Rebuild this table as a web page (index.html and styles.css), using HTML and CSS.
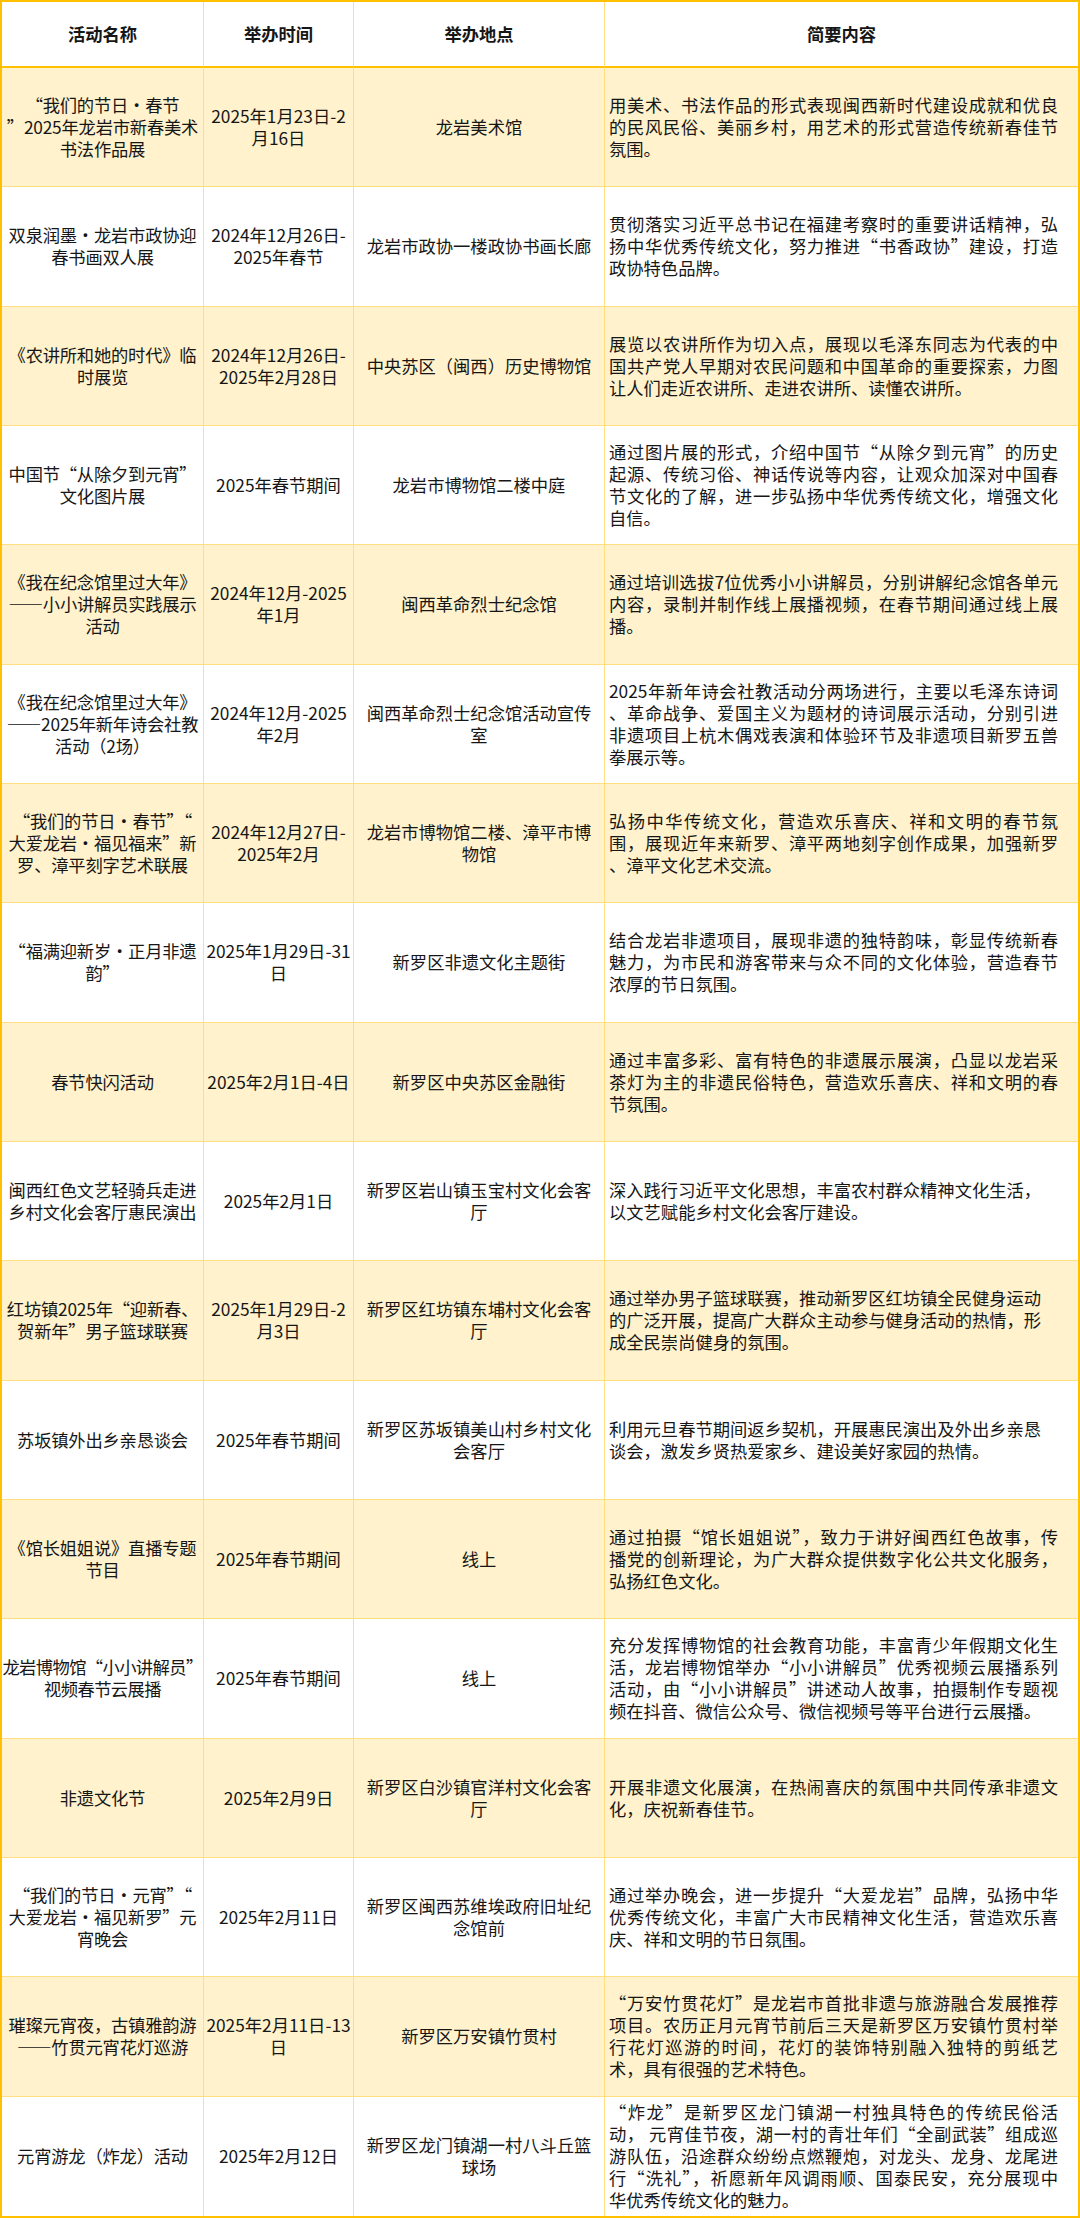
FILE: index.html
```html
<!DOCTYPE html>
<html lang="zh-CN">
<head>
<meta charset="utf-8">
<title>活动一览</title>
<link rel="stylesheet" href="styles.css">
</head>
<body>
<div class="sheet">
  <div class="row head">
    <div class="c c1">活动名称</div>
    <div class="c c2">举办时间</div>
    <div class="c c3">举办地点</div>
    <div class="c c4 hc">简要内容</div>
  </div>

  <div class="row alt">
    <div class="c c1">“我们的节日·春节<br>”2025年龙岩市新春美术<br>书法作品展</div>
    <div class="c c2">2025年1月23日-2<br>月16日</div>
    <div class="c c3">龙岩美术馆</div>
    <div class="c c4"><div class="txt"><span class="j">用美术、书法作品的形式表现闽西新时代建设成就和优良</span><span class="j">的民风民俗、美丽乡村，用艺术的形式营造传统新春佳节</span><span>氛围。</span></div></div>
  </div>

  <div class="row">
    <div class="c c1">双泉润墨·龙岩市政协迎<br>春书画双人展</div>
    <div class="c c2">2024年12月26日-<br>2025年春节</div>
    <div class="c c3">龙岩市政协一楼政协书画长廊</div>
    <div class="c c4"><div class="txt"><span class="j">贯彻落实习近平总书记在福建考察时的重要讲话精神，弘</span><span class="j">扬中华优秀传统文化，努力推进“书香政协”建设，打造</span><span>政协特色品牌。</span></div></div>
  </div>

  <div class="row alt">
    <div class="c c1">《农讲所和她的时代》临<br>时展览</div>
    <div class="c c2">2024年12月26日-<br>2025年2月28日</div>
    <div class="c c3">中央苏区（闽西）历史博物馆</div>
    <div class="c c4"><div class="txt"><span class="j">展览以农讲所作为切入点，展现以毛泽东同志为代表的中</span><span class="j">国共产党人早期对农民问题和中国革命的重要探索，力图</span><span>让人们走近农讲所、走进农讲所、读懂农讲所。</span></div></div>
  </div>

  <div class="row">
    <div class="c c1">中国节“从除夕到元宵”<br>文化图片展</div>
    <div class="c c2">2025年春节期间</div>
    <div class="c c3">龙岩市博物馆二楼中庭</div>
    <div class="c c4"><div class="txt"><span class="j">通过图片展的形式，介绍中国节“从除夕到元宵”的历史</span><span class="j">起源、传统习俗、神话传说等内容，让观众加深对中国春</span><span class="j">节文化的了解，进一步弘扬中华优秀传统文化，增强文化</span><span>自信。</span></div></div>
  </div>

  <div class="row alt">
    <div class="c c1">《我在纪念馆里过大年》<br>——小小讲解员实践展示<br>活动</div>
    <div class="c c2">2024年12月-2025<br>年1月</div>
    <div class="c c3">闽西革命烈士纪念馆</div>
    <div class="c c4"><div class="txt"><span class="j">通过培训选拔7位优秀小小讲解员，分别讲解纪念馆各单元</span><span class="j">内容，录制并制作线上展播视频，在春节期间通过线上展</span><span>播。</span></div></div>
  </div>

  <div class="row">
    <div class="c c1">《我在纪念馆里过大年》<br>——2025年新年诗会社教<br>活动（2场）</div>
    <div class="c c2">2024年12月-2025<br>年2月</div>
    <div class="c c3">闽西革命烈士纪念馆活动宣传<br>室</div>
    <div class="c c4"><div class="txt"><span class="j">2025年新年诗会社教活动分两场进行，主要以毛泽东诗词</span><span class="j">、革命战争、爱国主义为题材的诗词展示活动，分别引进</span><span class="j">非遗项目上杭木偶戏表演和体验环节及非遗项目新罗五兽</span><span>拳展示等。</span></div></div>
  </div>

  <div class="row alt">
    <div class="c c1">“我们的节日•春节”“<br>大爱龙岩•福见福来”新<br>罗、漳平刻字艺术联展</div>
    <div class="c c2">2024年12月27日-<br>2025年2月</div>
    <div class="c c3">龙岩市博物馆二楼、漳平市博<br>物馆</div>
    <div class="c c4"><div class="txt"><span class="j">弘扬中华传统文化，营造欢乐喜庆、祥和文明的春节氛</span><span class="j">围，展现近年来新罗、漳平两地刻字创作成果，加强新罗</span><span>、漳平文化艺术交流。</span></div></div>
  </div>

  <div class="row">
    <div class="c c1">“福满迎新岁·正月非遗<br>韵”</div>
    <div class="c c2">2025年1月29日-31<br>日</div>
    <div class="c c3">新罗区非遗文化主题街</div>
    <div class="c c4"><div class="txt"><span class="j">结合龙岩非遗项目，展现非遗的独特韵味，彰显传统新春</span><span class="j">魅力，为市民和游客带来与众不同的文化体验，营造春节</span><span>浓厚的节日氛围。</span></div></div>
  </div>

  <div class="row alt">
    <div class="c c1">春节快闪活动</div>
    <div class="c c2">2025年2月1日-4日</div>
    <div class="c c3">新罗区中央苏区金融街</div>
    <div class="c c4"><div class="txt"><span class="j">通过丰富多彩、富有特色的非遗展示展演，凸显以龙岩采</span><span class="j">茶灯为主的非遗民俗特色，营造欢乐喜庆、祥和文明的春</span><span>节氛围。</span></div></div>
  </div>

  <div class="row">
    <div class="c c1">闽西红色文艺轻骑兵走进<br>乡村文化会客厅惠民演出</div>
    <div class="c c2">2025年2月1日</div>
    <div class="c c3">新罗区岩山镇玉宝村文化会客<br>厅</div>
    <div class="c c4"><div class="txt"><span>深入践行习近平文化思想，丰富农村群众精神文化生活，</span><span>以文艺赋能乡村文化会客厅建设。</span></div></div>
  </div>

  <div class="row alt">
    <div class="c c1">红坊镇2025年“迎新春、<br>贺新年”男子篮球联赛</div>
    <div class="c c2">2025年1月29日-2<br>月3日</div>
    <div class="c c3">新罗区红坊镇东埔村文化会客<br>厅</div>
    <div class="c c4"><div class="txt"><span>通过举办男子篮球联赛，推动新罗区红坊镇全民健身运动</span><span>的广泛开展，提高广大群众主动参与健身活动的热情，形</span><span>成全民崇尚健身的氛围。</span></div></div>
  </div>

  <div class="row">
    <div class="c c1">苏坂镇外出乡亲恳谈会</div>
    <div class="c c2">2025年春节期间</div>
    <div class="c c3">新罗区苏坂镇美山村乡村文化<br>会客厅</div>
    <div class="c c4"><div class="txt"><span>利用元旦春节期间返乡契机，开展惠民演出及外出乡亲恳</span><span>谈会，激发乡贤热爱家乡、建设美好家园的热情。</span></div></div>
  </div>

  <div class="row alt">
    <div class="c c1">《馆长姐姐说》直播专题<br>节目</div>
    <div class="c c2">2025年春节期间</div>
    <div class="c c3">线上</div>
    <div class="c c4"><div class="txt"><span class="j">通过拍摄“馆长姐姐说”，致力于讲好闽西红色故事，传</span><span class="j">播党的创新理论，为广大群众提供数字化公共文化服务，</span><span>弘扬红色文化。</span></div></div>
  </div>

  <div class="row">
    <div class="c c1 tight">龙岩博物馆“小小讲解员”<br>视频春节云展播</div>
    <div class="c c2">2025年春节期间</div>
    <div class="c c3">线上</div>
    <div class="c c4"><div class="txt"><span class="j">充分发挥博物馆的社会教育功能，丰富青少年假期文化生</span><span class="j">活，龙岩博物馆举办“小小讲解员”优秀视频云展播系列</span><span class="j">活动，由“小小讲解员”讲述动人故事，拍摄制作专题视</span><span>频在抖音、微信公众号、微信视频号等平台进行云展播。</span></div></div>
  </div>

  <div class="row alt">
    <div class="c c1">非遗文化节</div>
    <div class="c c2">2025年2月9日</div>
    <div class="c c3">新罗区白沙镇官洋村文化会客<br>厅</div>
    <div class="c c4"><div class="txt"><span class="j">开展非遗文化展演，在热闹喜庆的氛围中共同传承非遗文</span><span>化，庆祝新春佳节。</span></div></div>
  </div>

  <div class="row">
    <div class="c c1">“我们的节日·元宵”“<br>大爱龙岩·福见新罗”元<br>宵晚会</div>
    <div class="c c2">2025年2月11日</div>
    <div class="c c3">新罗区闽西苏维埃政府旧址纪<br>念馆前</div>
    <div class="c c4"><div class="txt"><span class="j">通过举办晚会，进一步提升“大爱龙岩”品牌，弘扬中华</span><span class="j">优秀传统文化，丰富广大市民精神文化生活，营造欢乐喜</span><span>庆、祥和文明的节日氛围。</span></div></div>
  </div>

  <div class="row alt">
    <div class="c c1">璀璨元宵夜，古镇雅韵游<br>——竹贯元宵花灯巡游</div>
    <div class="c c2">2025年2月11日-13<br>日</div>
    <div class="c c3">新罗区万安镇竹贯村</div>
    <div class="c c4"><div class="txt"><span class="j">“万安竹贯花灯”是龙岩市首批非遗与旅游融合发展推荐</span><span class="j">项目。农历正月元宵节前后三天是新罗区万安镇竹贯村举</span><span class="j">行花灯巡游的时间，花灯的装饰特别融入独特的剪纸艺</span><span>术，具有很强的艺术特色。</span></div></div>
  </div>

  <div class="row last">
    <div class="c c1">元宵游龙（炸龙）活动</div>
    <div class="c c2">2025年2月12日</div>
    <div class="c c3">新罗区龙门镇湖一村八斗丘篮<br>球场</div>
    <div class="c c4"><div class="txt"><span class="j">“炸龙”是新罗区龙门镇湖一村独具特色的传统民俗活</span><span class="j">动， 元宵佳节夜，湖一村的青壮年们“全副武装”组成巡</span><span class="j">游队伍，沿途群众纷纷点燃鞭炮，对龙头、龙身、龙尾进</span><span class="j">行“洗礼”，祈愿新年风调雨顺、国泰民安，充分展现中</span><span>华优秀传统文化的魅力。</span></div></div>
  </div>
</div>
</body>
</html>
```

FILE: styles.css
```css
html, body {
  margin: 0;
  padding: 0;
  background: #ffffff;
}

body {
  font-family: "Noto Sans CJK SC", "Noto Sans", "Liberation Sans", sans-serif;
  color: #161616;
  font-size: 17.3px;
  line-height: 22px;
}

.sheet {
  box-sizing: border-box;
  width: 1080px;
  height: 2218px;
  border: 2px solid #ffc000;
  display: grid;
  grid-template-columns: 202px 150px 251px 1fr;
  grid-template-rows: 66px repeat(18, 1fr);
}

.row {
  display: contents;
}

.c {
  box-sizing: border-box;
  display: flex;
  align-items: center;
  justify-content: center;
  text-align: center;
  border-right: 1px solid #ffdf80;
  border-bottom: 1px solid #ffdf80;
  min-height: 0;
  min-width: 0;
}

.c1,
.c2,
.c3 {
  white-space: nowrap;
  padding: 0;
}

.c1 {
  letter-spacing: -0.2px;
}

.c1.tight {
  letter-spacing: -0.6px;
}

.c4 {
  border-right: none;
  justify-content: flex-start;
  text-align: left;
  padding: 0 20px 0 4px;
}

.head .c {
  font-weight: 700;
  border-bottom: 2px solid #ffc000;
  background: #ffffff;
  letter-spacing: 0;
}

.head .hc {
  justify-content: center;
  padding: 0;
}

.alt .c {
  background: #fff2cc;
}

.last .c {
  border-bottom: none;
}

.txt {
  width: 100%;
}

.txt span {
  display: block;
  white-space: nowrap;
}

.txt .j {
  text-align: justify;
  text-align-last: justify;
}
```
